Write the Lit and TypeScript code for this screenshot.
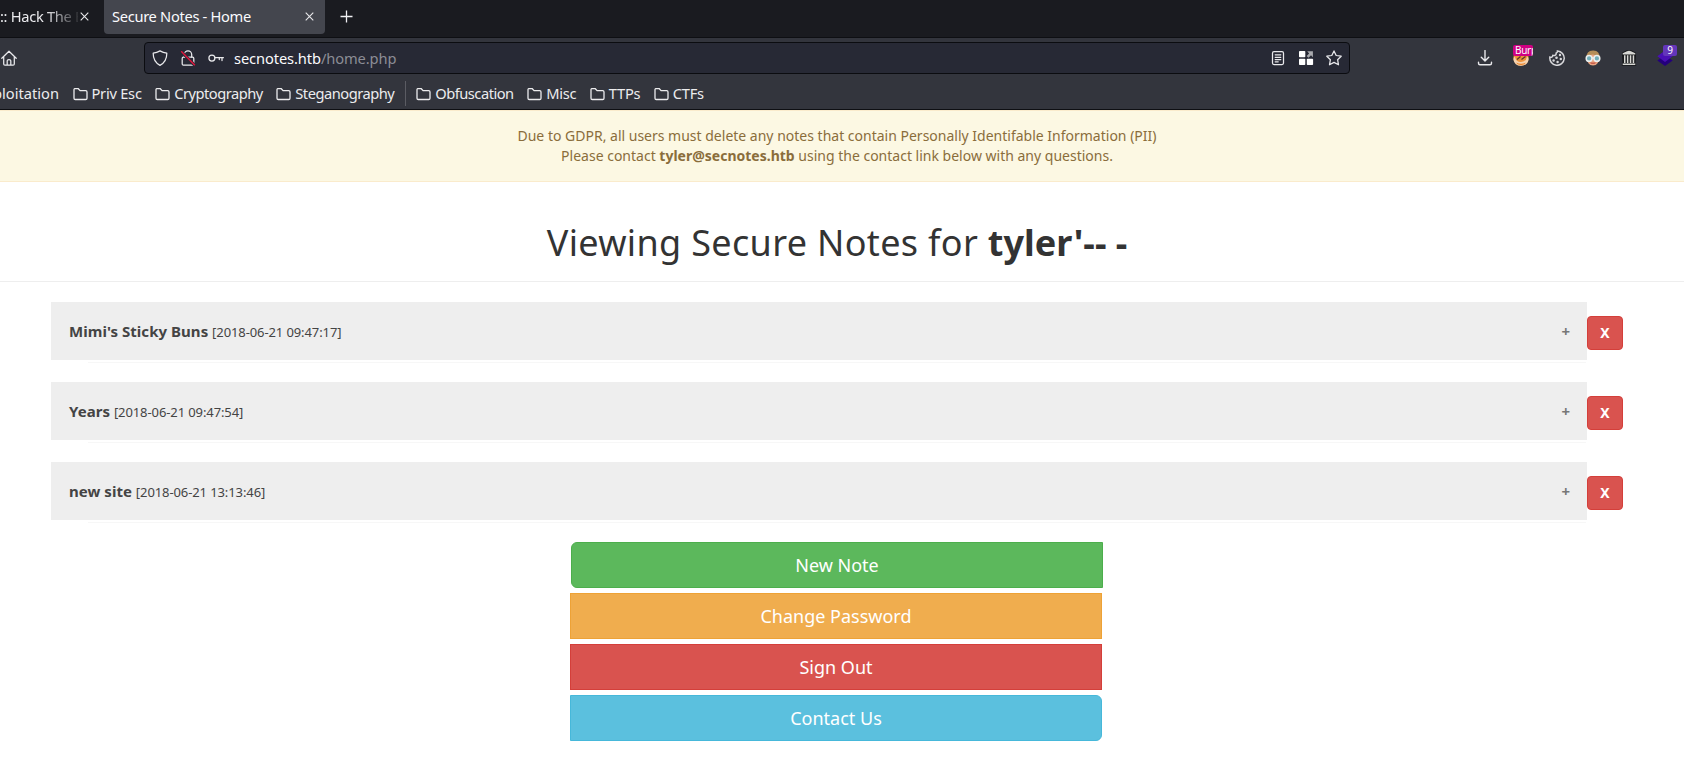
import { LitElement, html, css, svg, SVGTemplateResult } from "lit";
import { customElement, property } from "lit/decorators.js";

const line = (body: SVGTemplateResult) => svg`<g fill="none" stroke="#e9e9ec" stroke-width="1.25" stroke-linecap="round" stroke-linejoin="round">${body}</g>`;

const ICONS: Record<string, SVGTemplateResult> = {
  home: line(svg`<path d="M.8 8.3 8 1.2l7.200 7.100M2.700 6.800v7.200q0 1.200 1.200 1.200h8.200q1.200 0 1.200-1.200V6.800M6.200 15v-4.200q0-1.300 1.800-1.300t1.800 1.300V15"/>`),
  shield: line(svg`<path d="M8 .9c2 1.100 4.200 1.900 6.800 2.300C14.900 8.500 13.500 12.500 8 15.400 2.500 12.500 1.100 8.500 1.200 3.200 3.800 2.800 6 2 8 .9z"/>`),
  lock: svg`${line(svg`<rect x="2.200" y="7.200" width="11.600" height="8" rx="1.200"/><path d="M4.300 7V4.500a3.700 3.700 0 0 1 7.400 0V7"/>`)}<path d="M1.200 1.500 14.800 15.300" stroke="#292b36" stroke-width="3.200"/><path d="M1.200 1.200 14.900 15.300" stroke="#e2143c" stroke-width="1.400"/>`,
  key: line(svg`<circle cx="3.900" cy="8" r="3"/><path d="M7 7.700h8.400M14 7.800v2.800M11.300 7.800v1.800"/>`),
  reader: line(svg`<rect x="2.500" y="1.700" width="11" height="12.800" rx="1.500"/><path d="M5.200 4.800h5.600M5.200 7.300h5.600M5.200 9.500h5.600M5.200 11.800h3"/>`),
  blocks: svg`<g fill="#fff"><rect x="1" y="1" width="6.300" height="6.200" rx=".8"/><rect x="1" y="8.800" width="6.300" height="6.200" rx=".8"/><rect x="8.800" y="8.800" width="6.300" height="6.200" rx=".8"/></g><path d="M9.200 1.300h5.700v5.900l-1.900-1.900-2.500 2.500-1.900-1.700 2.500-2.500z" fill="#a9aaae"/>`,
  star: line(svg`<path d="M8 .9l2.200 4.600 5 .7-3.600 3.500.9 5.100L8 12.400l-4.500 2.400.9-5.100L.8 6.200l5-.7z"/>`),
  download: line(svg`<path stroke-width="1.400" d="M8 .5v10.200M4.300 7.200 8 10.900l3.700-3.700M1.500 12.200v1q0 1.500 1.500 1.500h10q1.500 0 1.500-1.500v-1"/>`),
  burp: svg`<circle cx="8" cy="8" r="7.700" fill="#ed9138"/><path d="M.4 9.400q0-2 1.500-3 1 5.500 6.100 5.500t6.100-5.500q1.500 1 1.500 3Q14.500 15.700 8 15.700T.4 9.400z" fill="#f4d2b0"/><path d="M3.200 12.600q4.800 2.400 9.600 0l-1.300 1.700q-3.500 1.500-7 0z" fill="#e98328"/><path d="M4 9.500l3.500-3M8.500 9.500l4-3" stroke="#55362b" stroke-width="1.200"/>`,
  cookie: svg`<path d="M7.500.9a7.200 7.200 0 1 0 7.600 6.200c-1.500.6-2.800-.2-2.900-1.600C10.200 5.900 8.500 5 8.900 3.100 7.900 2.700 7.400 1.900 7.500.9z" fill="none" stroke="#d8d8db" stroke-width="1.500" transform="translate(16 0) scale(-1 1)"/><g fill="#d8d8db"><circle cx="7.500" cy="7.800" r="1.300"/><circle cx="11" cy="5" r="1.200"/><circle cx="11.800" cy="9" r="1.200"/><circle cx="8.600" cy="12" r="1.200"/><circle cx="4.600" cy="10.500" r="1.200"/></g>`,
  face: svg`<path d="M1.500 8Q1 .6 8 .4T14.500 8z" fill="#b58d58"/><path d="M2.500 7.500Q5 4 8 4.500t5.500 3Q14.500 15.200 8 15.600 1.500 15.200 2.500 7.500z" fill="#e9a582"/><path d="M5.500 12q2.500 1.200 5 0v1.500q-2.500 1-5 0z" fill="#c65c4b"/><circle cx="4.100" cy="8.400" r="2.900" fill="#72aeba" stroke="#eceeed" stroke-width="1.500"/><circle cx="11.900" cy="8.400" r="2.900" fill="#72aeba" stroke="#eceeed" stroke-width="1.500"/><path d="M7 8h2" stroke="#eceeed" stroke-width="1.500"/>`,
  pillars: svg`<path d="M1 5.500V2.800L5.500.3h5L15 2.800v2.700l-.5 7 .8 3.300H.7l.8-3.300z" fill="#17181b"/><path d="M1.700 4.500V3.200L6 1.200Q8 .2 10 1.200l4.300 2v1.300zM1.700 13.600h12.600V15H1.700zM3 5.300h1.500v7.700H3zM5.900 5.300h1.500v7.700H5.900zM8.800 5.300h1.500v7.700H8.800zM11.700 5.300h1.500v7.700h-1.500z" fill="#d7d7d4"/>`,
  layers: svg`<path d="M.3 10.500 8 5l7.700 5.500L8 16z" fill="#24007c"/><path d="M.3 6.200 8 .5l7.700 5.700L8 12z" fill="#4a0fb5"/>`,
  folder: svg`<path d="M1.700 1.700h3.600l1.800 1.900h5.600q1.300 0 1.300 1.300v6.300q0 1.300-1.300 1.300H2.300Q1 12.500 1 11.200V2.900q0-1.200.7-1.200z" fill="none" stroke="#ececee" stroke-width="1.300"/>`,
};

@customElement("ui-icon")
class UiIcon extends LitElement {
  @property() name = "home";
  static styles = css`
    :host { display: block; flex: none; width: 16px; height: 16px; }
    :host([name="folder"]) { width: 15px; height: 14px; }
    svg { display: block; width: 100%; height: 100%; }
  `;
  render() {
    return html`<svg viewBox=${this.name === "folder" ? "0 0 15 14" : "0 0 16 16"}>${ICONS[this.name]}</svg>`;
  }
}

@customElement("browser-chrome")
class BrowserChrome extends LitElement {
  static styles = css`
    :host { display: block; height: 110px; box-sizing: border-box; overflow: hidden; color: #fbfbfe; background: #33353d;
      border-bottom: 1px solid #0e0f13; font: 14.667px/20px "Noto Sans", sans-serif; white-space: nowrap; }
    .tabs { height: 38px; box-sizing: border-box; display: flex; background: #1a1b20; border-bottom: 1px solid #0e0f13; }
    .tab { display: flex; height: 34px; box-sizing: border-box; align-items: center; justify-content: space-between; letter-spacing: -.31px; }
    .tab span { padding-bottom: 2px; }
    .previous { width: 104px; padding-right: 15px; color: #ebebee; }
    .fade { width: 78px; overflow: hidden; -webkit-mask-image: linear-gradient(90deg, #000 46px, transparent 82px); mask-image: linear-gradient(90deg, #000 46px, transparent 82px); }
    .active { width: 221px; padding: 0 11px 0 8px; background: #44464e; border-radius: 0 0 4px 4px; }
    .x { width: 9px; height: 9px; display: block; flex: none; margin-bottom: 2px; }
    .plus { width: 13px; height: 13px; margin: 10px 0 0 15px; }
    .nav { height: 42px; display: flex; align-items: center; }
    .address { margin: -2px 0 0 127px; width: 1206px; height: 32px; box-sizing: border-box; border: 1px solid #0b0c10; border-radius: 4px;
      background: #272935; display: flex; align-items: center; gap: 12px; padding: 0 7px; }
    .url { flex: 1; margin-left: -2px; letter-spacing: -.1px; }
    .dim { color: #8c8d95; }
    .home { margin-left: 1px; }
    .home, .tool { margin-top: -2px; }
    .tools { display: flex; gap: 20px; margin-left: 127px; }
    .tool { position: relative; }
    .badge { position: absolute; top: -5px; left: 0; width: 20px; height: 11px; overflow: hidden; border-radius: 2px; background: #cf0082; font-size: 10px; line-height: 11px; text-indent: 2px; letter-spacing: -.3px; }
    .count { left: 6px; width: 14px; background: #6436ba; text-align: center; text-indent: 0; }
    .bookmarks { height: 27px; display: flex; align-items: center; gap: 13.500px; color: #ececee; }
    .cut { width: 59px; display: flex; justify-content: flex-end; overflow: hidden; margin-bottom: 1px; }
    .bookmark { display: flex; align-items: center; gap: 4px; letter-spacing: -.49px; }
    .bookmark span { margin-bottom: 1px; }
    .loose { letter-spacing: -.25px; }
    .sep { width: 1px; height: 25px; margin: 0 -3px; background: #5b5c63; }
  `;
  private close = html`<svg class="x" viewBox="0 0 9 9"><path d="M.7.7l7.600 7.600M8.300.7.7 8.300" stroke="#e8e8eb" stroke-width="1.100"/></svg>`;
  private bookmark(name: string) {
    return html`<div class="bookmark ${name.length < 9 ? "loose" : ""}"><ui-icon name="folder"></ui-icon><span>${name}</span></div>`;
  }
  render() {
    return html`
      <div class="tabs">
        <div class="tab previous"><span class="fade">:: Hack The B</span>${this.close}</div>
        <div class="tab active"><span>Secure Notes - Home</span>${this.close}</div>
        <svg class="plus" viewBox="0 0 13 13"><path d="M6.500.5v12M.5 6.500h12" stroke="#f1f1f4" stroke-width="1.300"/></svg>
      </div>
      <div class="nav">
        <ui-icon class="home" name="home"></ui-icon>
        <div class="address">
          <ui-icon name="shield"></ui-icon><ui-icon name="lock"></ui-icon><ui-icon name="key"></ui-icon>
          <span class="url">secnotes.htb<span class="dim">/home.php</span></span>
          <ui-icon name="reader"></ui-icon><ui-icon name="blocks"></ui-icon><ui-icon name="star"></ui-icon>
        </div>
        <div class="tools">
          <div class="tool"><ui-icon name="download"></ui-icon></div>
          <div class="tool"><ui-icon name="burp"></ui-icon><span class="badge">Burp</span></div>
          <div class="tool"><ui-icon name="cookie"></ui-icon></div>
          <div class="tool"><ui-icon name="face"></ui-icon></div>
          <div class="tool"><ui-icon name="pillars"></ui-icon></div>
          <div class="tool"><ui-icon name="layers"></ui-icon><span class="badge count">9</span></div>
        </div>
      </div>
      <div class="bookmarks">
        <div class="cut"><span>ploitation</span></div>
        ${["Priv Esc", "Cryptography", "Steganography"].map((n) => this.bookmark(n))}
        <span class="sep"></span>
        ${["Obfuscation", "Misc", "TTPs", "CTFs"].map((n) => this.bookmark(n))}
      </div>`;
  }
}

@customElement("app-root")
class AppRoot extends LitElement {
  static styles = css`
    :host { display: block; height: 773px; overflow: hidden; background: #fff; color: #333; font: 14px/20px "Noto Sans", sans-serif; }
    .alert { height: 72px; box-sizing: border-box; padding: 15px 10px 15px 0; text-align: center; color: #8a6d3b; background: #fcf8e3;
      border-top: 1px solid #faebcc; border-bottom: 1px solid #faebcc; }
    .header { height: 100px; box-sizing: border-box; padding: 41px 10px 0 0; border-bottom: 1px solid #eee; text-align: center; }
    h1 { margin: 0; font-size: 36px; line-height: 40px; font-weight: 400; letter-spacing: .34px; }
    h1 b { letter-spacing: 0; }
    .notes { padding: 20px 61px 0 51px; }
    .note { display: flex; height: 80px; align-items: flex-start; }
    .main { flex: 1; }
    .title { height: 58px; box-sizing: border-box; padding: 0 18px; display: flex; align-items: center; justify-content: space-between; background: #eee; color: #444; font-size: 15px; }
    .title b { letter-spacing: .04px; }
    .title small { font-size: 13px; letter-spacing: -.1px; }
    .title .mark { color: #777; font-weight: 700; font-size: 15px; margin-right: -1px; }
    .under { height: 1px; margin: 2px 1px 0 37px; background: #f7f7f7; }
    .remove { width: 36px; height: 34px; margin-top: 14px; box-sizing: border-box; border: 1px solid #d43f3a; border-radius: 4px; background: #d9534f;
      color: #fff; font: 700 14px/20px "Noto Sans", sans-serif; padding: 0; }
    .actions { display: flex; flex-direction: column; gap: 5px; width: 532px; margin-left: 570px; }
    .btn { height: 46px; box-sizing: border-box; border: 1px solid; color: #fff; padding: 0; font: 18px/24px "Noto Sans", sans-serif; }
    .new { margin: 0 -1px 0 1px; background: #5cb85c; border-color: #4cae4c; border-radius: 6px 0 0 6px; }
    .password { background: #f0ad4e; border-color: #eea236; }
    .out { background: #d9534f; border-color: #d43f3a; }
    .contact { background: #5bc0de; border-color: #46b8da; border-radius: 0 6px 6px 0; }
  `;
  private notes = [
    ["Mimi's Sticky Buns", "2018-06-21 09:47:17"],
    ["Years", "2018-06-21 09:47:54"],
    ["new site", "2018-06-21 13:13:46"],
  ];
  render() {
    return html`
      <browser-chrome></browser-chrome>
      <div class="alert">Due to GDPR, all users must delete any notes that contain Personally Identifable Information (PII)<br />Please contact <b>tyler@secnotes.htb</b> using the contact link below with any questions.</div>
      <div class="header"><h1>Viewing Secure Notes for <b>tyler'-- -</b></h1></div>
      <div class="notes">
        ${this.notes.map(([name, date]) => html`
          <div class="note">
            <div class="main">
              <div class="title"><span><b>${name}</b> <small>[${date}]</small></span><span class="mark">+</span></div>
              <div class="under"></div>
            </div>
            <button class="remove">X</button>
          </div>`)}
      </div>
      <div class="actions">
        <button class="btn new">New Note</button>
        <button class="btn password">Change Password</button>
        <button class="btn out">Sign Out</button>
        <button class="btn contact">Contact Us</button>
      </div>`;
  }
}
